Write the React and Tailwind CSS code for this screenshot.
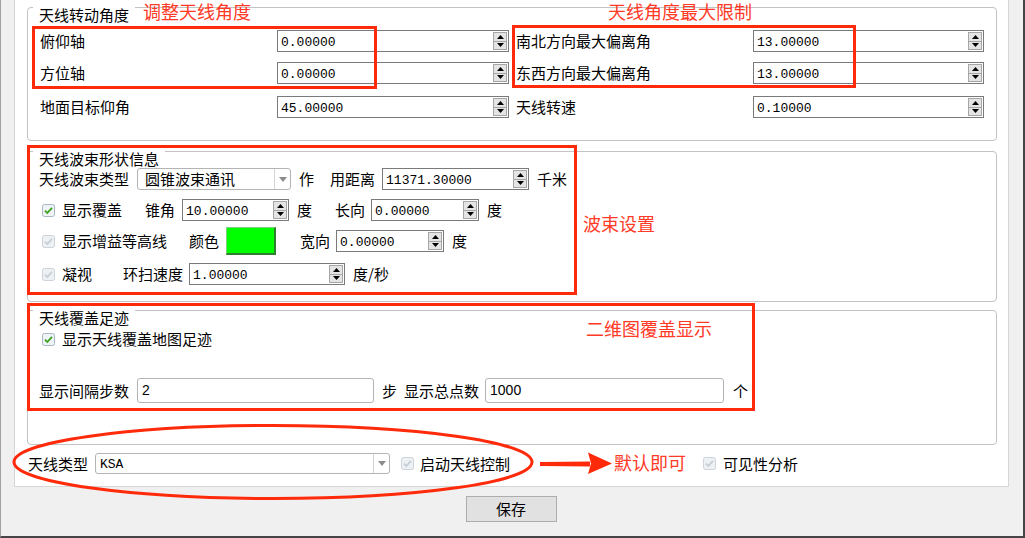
import React from "react";

const CJK = { fontFamily: '"Noto Sans CJK SC", "Noto Sans", sans-serif' };

function Spin({ className, value }) {
  return (
    <div className={"flex items-center h-[22px] border border-[#7a7a7a] bg-white shrink-0 " + className}>
      <span className="flex-1 pl-[3px] pt-[3px] text-[13px] leading-[17px] h-[20px] text-black" style={{ fontFamily: '"Liberation Mono", monospace' }}>{value}</span>
      <div className="w-[14px] h-[18px] mr-[1px] border border-[#a6a6a6] bg-[#e4e4e4] flex flex-col">
        <div className="flex-1 flex items-center justify-center border-b border-[#a6a6a6]">
          <svg width="7" height="4" viewBox="0 0 7 4"><path d="M3.5 0L7 4H0z" fill="#000" /></svg>
        </div>
        <div className="flex-1 flex items-center justify-center">
          <svg width="7" height="4" viewBox="0 0 7 4"><path d="M0 0H7L3.5 4z" fill="#000" /></svg>
        </div>
      </div>
    </div>
  );
}

function Combo({ className, value, mono, divider }) {
  return (
    <div className={"flex items-center border border-[#b4b4b4] rounded-[3px] bg-white shrink-0 " + className}>
      <span className={"flex-1 text-black " + (mono ? "pl-[4px] pt-[2px] text-[13px] leading-[17px]" : "pl-[7px] text-[15px]")} style={mono ? { fontFamily: '"Liberation Mono", monospace' } : CJK}>{value}</span>
      <div className={"h-full flex items-center justify-center border-l border-[#d4d4d4] " + divider}>
        <svg width="8" height="5" viewBox="0 0 8 5"><path d="M0 0H8L4 5z" fill="#8c8c8c" /></svg>
      </div>
    </div>
  );
}

function Check({ disabled }) {
  return (
    <svg width="13" height="13" viewBox="0 0 13 13" className="shrink-0">
      <rect x="0.5" y="0.5" width="12" height="12" rx="2" fill={disabled ? "#eef1f4" : "#eef3f8"} stroke={disabled ? "#ccd3da" : "#a9b7c4"} />
      <path d="M3 6.6 L5.3 9 L10 3.9" stroke={disabled ? "#c5cdd5" : "#39a019"} strokeWidth="1.8" fill="none" />
    </svg>
  );
}

function T({ children, className = "" }) {
  return <span className={"text-[15px] leading-[22px] text-black whitespace-nowrap shrink-0 " + className}>{children}</span>;
}

function Group({ title, className, children }) {
  return (
    <div className={"relative border border-[#c3c3c3] rounded-[4px] w-[970px] ml-[12px] " + className}>
      <span className="absolute left-[5px] top-[-1px] px-[6px] bg-white text-[15px] leading-[15px] text-black">{title}</span>
      {children}
    </div>
  );
}

function Input({ className, value }) {
  return (
    <div className={"flex items-center border border-[#b4b4b4] rounded-[3px] bg-white shrink-0 " + className}>
      <span className="pl-[4px] text-[14px] text-black" style={{ fontFamily: '"Liberation Sans", sans-serif' }}>{value}</span>
    </div>
  );
}

export default function App() {
  const red = "#ff2a0a";
  return (
    <div className="relative w-[1025px] h-[538px] bg-[#f0f0f0] overflow-hidden flex flex-col border-l border-l-[#a0a0a0] border-r-2 border-r-[#454545] border-b-2 border-b-[#454545]" style={CJK}>
      <div className="ml-[13px] w-[995px] h-[487px] shrink-0 bg-white border-l border-r border-b border-[#d6d6d6] pt-[7px] flex flex-col">
        {/* Group 1 */}
        <Group title="天线转动角度" className="h-[134px] pt-[22px] pl-[12px]">
          <div className="flex items-center">
            <T className="w-[237px]">俯仰轴</T>
            <Spin className="w-[232px]" value="0.00000" />
            <T className="w-[237px] ml-[7px]">南北方向最大偏离角</T>
            <Spin className="w-[231px]" value="13.00000" />
          </div>
          <div className="flex items-center mt-[10px]">
            <T className="w-[237px]">方位轴</T>
            <Spin className="w-[232px]" value="0.00000" />
            <T className="w-[237px] ml-[7px]">东西方向最大偏离角</T>
            <Spin className="w-[231px]" value="13.00000" />
          </div>
          <div className="flex items-center mt-[12px]">
            <T className="w-[237px]">地面目标仰角</T>
            <Spin className="w-[232px]" value="45.00000" />
            <T className="w-[237px] ml-[7px]">天线转速</T>
            <Spin className="w-[231px]" value="0.10000" />
          </div>
        </Group>

        {/* Group 2 */}
        <Group title="天线波束形状信息" className="h-[151px] mt-[10px] pt-[16px] pl-[11px]">
          <div className="flex items-center h-[22px]">
            <T>天线波束类型</T>
            <Combo className="w-[154px] h-[22px] ml-[8px]" value="圆锥波束通讯" divider="w-[16px]" />
            <T className="ml-[8px]">作</T>
            <T className="ml-[16px]">用距离</T>
            <Spin className="w-[147px] ml-[7px]" value="11371.30000" />
            <T className="ml-[8px]">千米</T>
          </div>
          <div className="flex items-center h-[22px] mt-[9px]">
            <span className="ml-[3px] flex"><Check /></span>
            <T className="ml-[7px]">显示覆盖</T>
            <T className="ml-[23px]">锥角</T>
            <Spin className="w-[107px] ml-[7px]" value="10.00000" />
            <T className="ml-[8px]">度</T>
            <T className="ml-[23px]">长向</T>
            <Spin className="w-[108px] ml-[6px]" value="0.00000" />
            <T className="ml-[8px]">度</T>
          </div>
          <div className="flex items-center h-[28px] mt-[6px]">
            <span className="ml-[3px] flex"><Check disabled /></span>
            <T className="ml-[7px]">显示增益等高线</T>
            <T className="ml-[22px]">颜色</T>
            <div className="ml-[7px] w-[50px] h-[28px] bg-[#00ff00] border border-[#7fcf7f] border-r-2 border-b-2 border-r-[#2f7f2f] border-b-[#2f7f2f]" />
            <T className="ml-[24px]">宽向</T>
            <Spin className="w-[108px] ml-[6px]" value="0.00000" />
            <T className="ml-[8px]">度</T>
          </div>
          <div className="flex items-center h-[22px] mt-[8px]">
            <span className="ml-[3px] flex"><Check disabled /></span>
            <T className="ml-[7px]">凝视</T>
            <T className="ml-[31px]">环扫速度</T>
            <Spin className="w-[156px] ml-[6px]" value="1.00000" />
            <T className="ml-[8px]">度/秒</T>
          </div>
        </Group>

        {/* Group 3 */}
        <Group title="天线覆盖足迹" className="h-[135px] mt-[8px] pt-[17px] pl-[11px]">
          <div className="flex items-center h-[22px]">
            <span className="ml-[3px] flex"><Check /></span>
            <T className="ml-[7px]">显示天线覆盖地图足迹</T>
          </div>
          <div className="flex items-center h-[25px] mt-[28px]">
            <T>显示间隔步数</T>
            <Input className="w-[237px] h-[25px] ml-[8px]" value="2" />
            <T className="ml-[8px]">步</T>
            <T className="ml-[7px]">显示总点数</T>
            <Input className="w-[239px] h-[25px] ml-[6px]" value="1000" />
            <T className="ml-[9px]">个</T>
          </div>
        </Group>

        {/* Bottom row */}
        <div className="flex items-center h-[21px] mt-[8px] pl-[13px]">
          <T>天线类型</T>
          <Combo className="w-[295px] h-[21px] ml-[7px]" value="KSA" mono divider="w-[16px]" />
          <span className="ml-[11px] flex"><Check disabled /></span>
          <T className="ml-[6px]">启动天线控制</T>
          <span className="ml-[193px] flex"><Check disabled /></span>
          <T className="ml-[7px]">可见性分析</T>
        </div>
      </div>

      <div className="flex justify-center mt-[9px]">
        <button className="w-[91px] h-[26px] bg-[#e1e1e1] border border-[#adadad] text-[15px] text-black leading-[22px] ml-[-2px]">保存</button>
      </div>

      {/* Annotation overlays */}
      <div className="absolute left-[31px] top-[26px] w-[345px] h-[63px] border-[3px] border-[#ff2a0a] pointer-events-none" />
      <div className="absolute left-[511px] top-[25px] w-[344px] h-[63px] border-[3px] border-[#ff2a0a] pointer-events-none" />
      <div className="absolute left-[26px] top-[145px] w-[550px] h-[150px] border-[3px] border-[#ff2a0a] pointer-events-none" />
      <div className="absolute left-[26px] top-[303px] w-[728px] h-[108px] border-[3px] border-[#ff2a0a] pointer-events-none" />

      <span className="absolute left-[142px] top-[0px] text-[18px] leading-[22px] text-[#ff3a26] whitespace-nowrap">调整天线角度</span>
      <span className="absolute left-[607px] top-[0px] text-[18px] leading-[22px] text-[#ff3a26] whitespace-nowrap">天线角度最大限制</span>
      <span className="absolute left-[582px] top-[212px] text-[18px] leading-[22px] text-[#ff3a26] whitespace-nowrap">波束设置</span>
      <span className="absolute left-[585px] top-[317px] text-[18px] leading-[22px] text-[#ff3a26] whitespace-nowrap">二维图覆盖显示</span>
      <span className="absolute left-[613px] top-[451px] text-[18px] leading-[22px] text-[#ff3a26] whitespace-nowrap">默认即可</span>

      <svg className="absolute left-0 top-0 pointer-events-none" width="1025" height="538" viewBox="0 0 1025 538">
        <ellipse cx="272" cy="462" rx="259" ry="36.5" fill="none" stroke={red} strokeWidth="3" />
        <path d="M539 462 L589 461.5 L589 466.5 L539 466 Z" fill={red} />
        <path d="M587 452.5 L611 463.5 L587 474 L590 463.5 Z" fill={red} />
      </svg>
    </div>
  );
}
